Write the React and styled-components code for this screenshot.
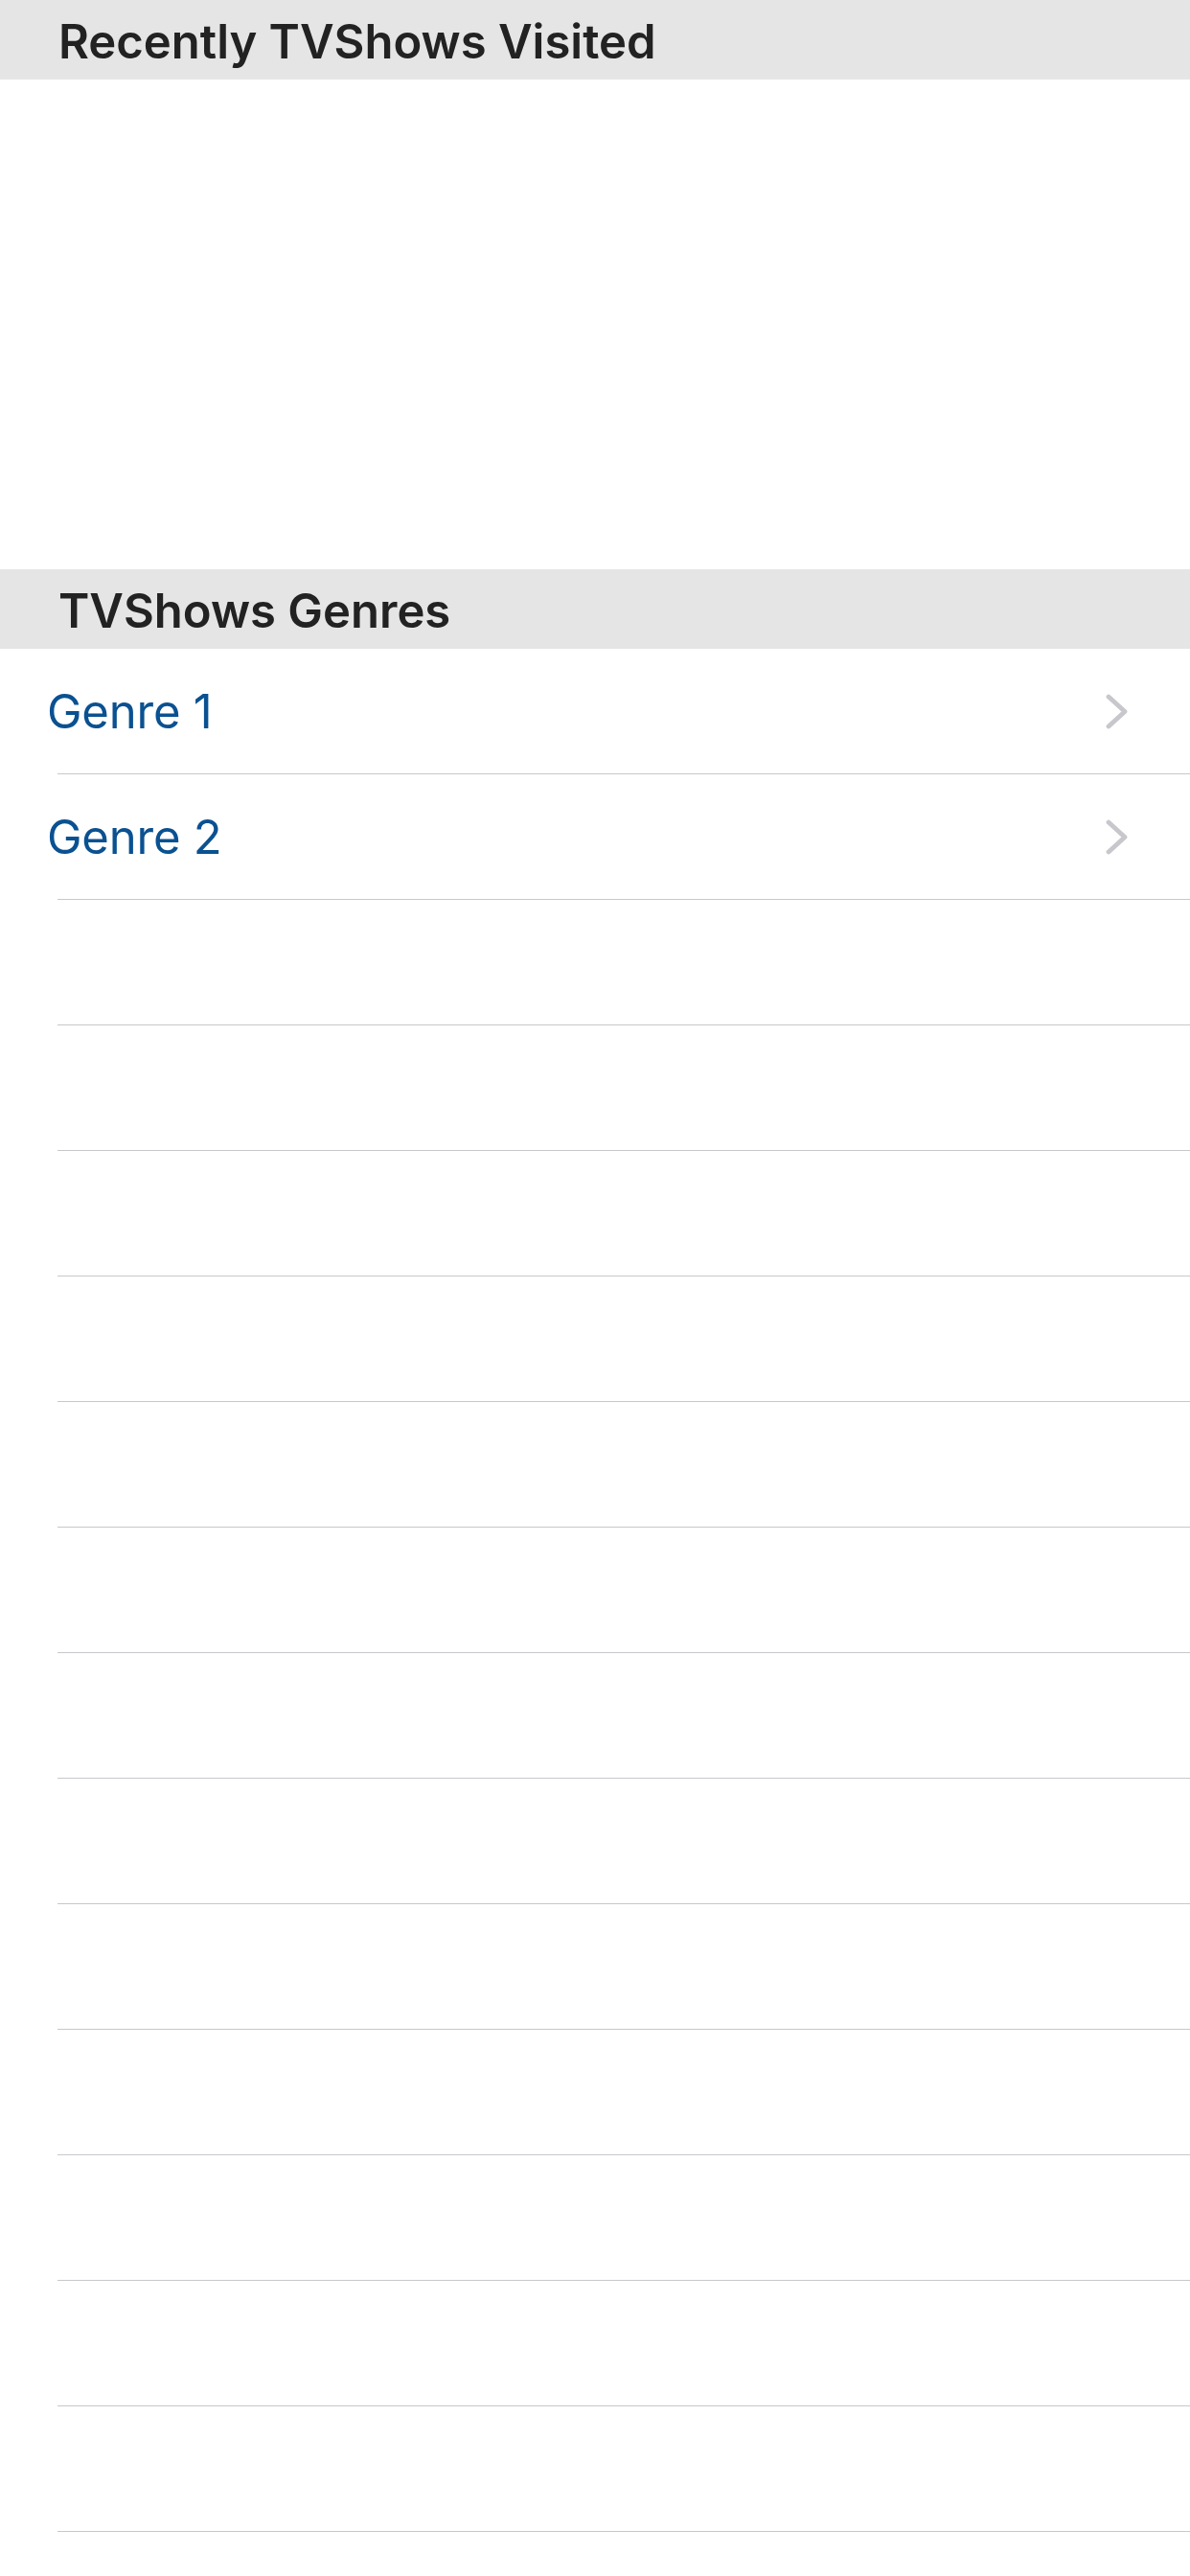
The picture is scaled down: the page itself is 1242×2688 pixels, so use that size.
import React from "react";
import styled, { createGlobalStyle } from "styled-components";

const GlobalStyle = createGlobalStyle`
  html, body {
    margin: 0;
    padding: 0;
    background: #fff;
  }
  body {
    font-family: Inter, "Noto Sans", "Liberation Sans", sans-serif;
    -webkit-font-smoothing: antialiased;
  }
`;

const Page = styled.div`
  width: 1242px;
  height: 2688px;
  overflow: hidden;
  background: #fff;
  display: flex;
  flex-direction: column;
`;

const SectionHeader = styled.div`
  height: 83px;
  flex-shrink: 0;
  display: flex;
  align-items: center;
  padding-left: 61px;
  padding-top: 4px;
  box-sizing: border-box;
  background-color: #e5e5e5;
  color: #222;
  font-size: 49px;
  font-weight: 600;
`;

const RecentArea = styled.div`
  height: 511px;
  flex-shrink: 0;
`;

const Cell = styled.div`
  display: flex;
  flex-direction: column;
  flex-shrink: 0;
`;

const CellContent = styled.div`
  height: 130px;
  display: flex;
  align-items: center;
  justify-content: space-between;
  padding: 0 65px 0 49px;
  box-sizing: border-box;
  cursor: ${(p) => (p.$link ? "pointer" : "default")};
`;

const GenreLabel = styled.span`
  color: #0a5191;
  font-size: 49px;
  font-weight: 400;
  letter-spacing: -0.2px;
`;

const Divider = styled.div`
  height: 1px;
  margin-left: 60px;
  background-color: #c8c7cc;
`;

function Chevron() {
  return (
    <svg width="23" height="37" viewBox="0 0 23 37" fill="none">
      <polyline
        points="3,3 20,18.5 3,34"
        stroke="#c7c7cc"
        strokeWidth="4.8"
        strokeLinecap="round"
        strokeLinejoin="round"
      />
    </svg>
  );
}

const genres = ["Genre 1", "Genre 2"];
const emptyRows = 13;

function App() {
  return (
    <>
      <GlobalStyle />
      <Page>
        <SectionHeader>Recently TVShows Visited</SectionHeader>
        <RecentArea />
        <SectionHeader>TVShows Genres</SectionHeader>
        {genres.map((g) => (
          <Cell key={g}>
            <CellContent $link>
              <GenreLabel>{g}</GenreLabel>
              <Chevron />
            </CellContent>
            <Divider />
          </Cell>
        ))}
        {Array.from({ length: emptyRows }).map((_, i) => (
          <Cell key={"empty" + i}>
            <CellContent />
            <Divider />
          </Cell>
        ))}
      </Page>
    </>
  );
}

export default App;
